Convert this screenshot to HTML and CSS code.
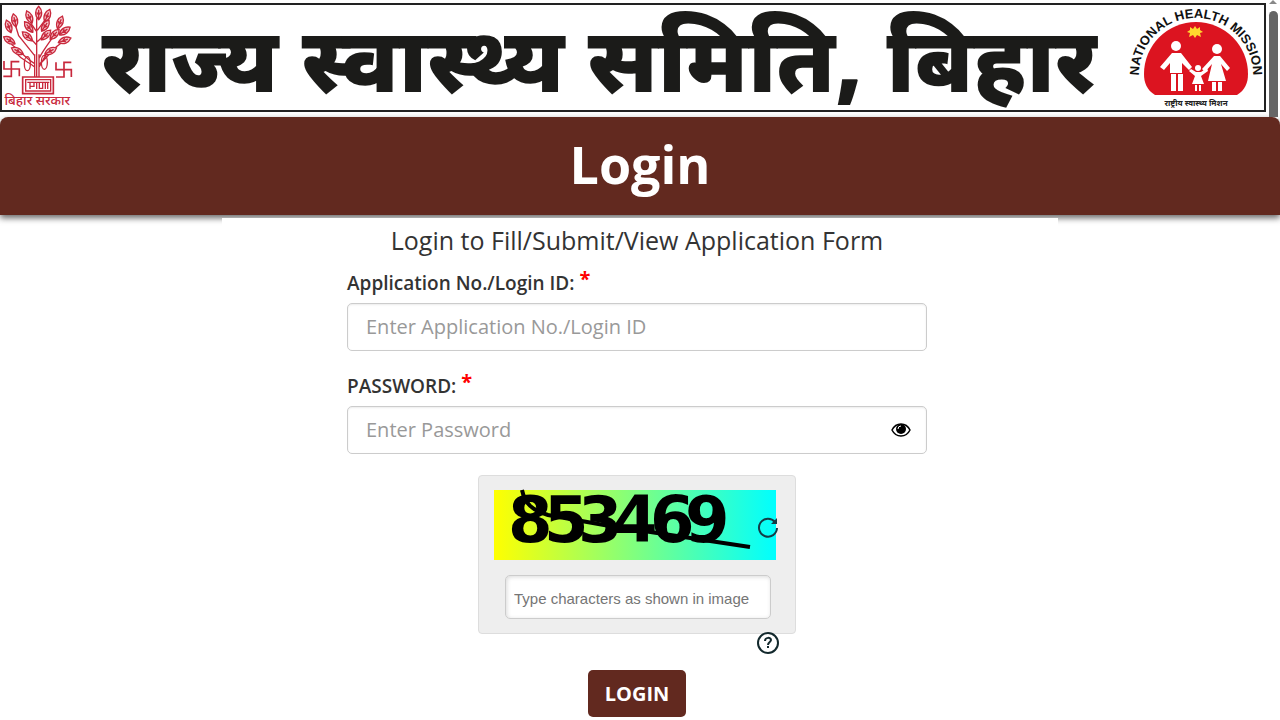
FILE: index.html
```html
<!DOCTYPE html>
<html lang="en">
<head>
    <meta charset="UTF-8">
    <meta name="viewport" content="width=device-width, initial-scale=1.0">
    <title>Login</title>
    <link rel="stylesheet" href="styles.css">
</head>
<body>
    <header class="top">
        <div class="banner">
            <svg class="bihar-logo" viewBox="0 0 216 318" role="img" aria-label="Bihar Sarkar">
                <defs>
                    <g id="leaf">
                        <path d="M0 20C-13 7 -11 -9 0 -20C11 -9 13 7 0 20Z" fill="#f6c9cf"/>
                        <path d="M0 20V-10M0 6L-6 -2M0 6L6 -2"/>
                    </g>
                </defs>
                <g fill="none" stroke="#c8283c" stroke-width="4">
                    <path d="M98 216V148M111 216V148M104 216V40M98 152L50 92L40 60M98 176C70 160 60 142 28 118M98 186C80 170 62 168 44 146M111 160C128 128 146 108 166 76M111 178C136 160 154 124 186 110M111 186C120 176 126 152 140 140M104 120L78 92M104 112L130 88M104 80L86 54M106 76L130 44"/>
                    <use href="#leaf" transform="translate(110 24)"/>
                    <use href="#leaf" transform="translate(82 36) rotate(-24)"/>
                    <use href="#leaf" transform="translate(136 32) rotate(22)"/>
                    <use href="#leaf" transform="translate(38 46) rotate(-12)"/>
                    <use href="#leaf" transform="translate(174 52) rotate(22)"/>
                    <use href="#leaf" transform="translate(20 64) rotate(-20)"/>
                    <use href="#leaf" transform="translate(80 66) rotate(-38)"/>
                    <use href="#leaf" transform="translate(130 62) rotate(34)"/>
                    <use href="#leaf" transform="translate(76 94) rotate(-48)"/>
                    <use href="#leaf" transform="translate(132 90) rotate(44)"/>
                    <use href="#leaf" transform="translate(158 88) rotate(42)"/>
                    <use href="#leaf" transform="translate(188 78) rotate(55)"/>
                    <use href="#leaf" transform="translate(22 106) rotate(-58)"/>
                    <use href="#leaf" transform="translate(188 106) rotate(70)"/>
                    <use href="#leaf" transform="translate(46 138) rotate(-62)"/>
                    <use href="#leaf" transform="translate(146 138) rotate(62)"/>
                    <ellipse cx="76" cy="176" rx="9" ry="21"/>
                    <ellipse cx="127" cy="172" rx="9" ry="21"/>
                </g>
                <g fill="none" stroke="#c8283c" stroke-width="5">
                    <path d="M6 168V192H52V214M52 170H28V214H4"/>
                    <path d="M162 172V194H208V216M208 172H186V216H162"/>
                    <path d="M62 216H154V266H62Z"/>
                    <path stroke-width="4" d="M71 224H146V258H71ZM76 232H142M84 232V252M84 244H96V232M104 232V252M112 232V250H122V234M130 232V252M137 232V252"/>
                </g>
                <text x="106" y="300" text-anchor="middle" class="bihar-text">बिहार सरकार</text>
            </svg>
            <h1 class="banner-title">राज्य स्वास्थ्य समिति, बिहार</h1>
            <svg class="nhm-logo" viewBox="0 0 140 106" role="img" aria-label="National Health Mission">
                <defs>
                    <path id="arc" d="M15 80V69A57 56 0 0 1 129 69V80"/>
                </defs>
                <path d="M31 90C23 85 20 78 20 69A52 52 0 0 1 124 69C124 78 121 85 113 90Z" fill="#dc1420"/>
                <path d="M71 21L73 24L76 22L76 25L79 27L76 28L77 32L73 30L71 33L69 30L65 32L66 28L63 27L66 25L66 22L69 24Z" fill="#ffd92e"/>
                <g fill="#fff">
                    <circle cx="52" cy="41" r="5"/>
                    <circle cx="93" cy="44" r="5"/>
                    <circle cx="74" cy="63" r="3"/>
                    <path d="M48 48H57L68 62L65 65L58 58V68H46V58L40 65L36 62Z"/>
                    <path d="M47 69H52V86H47ZM54 69H59V86H54Z"/>
                    <path d="M90 51H96L106 63L103 66L97 59L102 76H84L88 59L81 67L78 64Z"/>
                    <path d="M88 77H92V86H88ZM94 77H98V86H94Z"/>
                    <path d="M72 67H77L83 63L84 66L77 71L80 79H68L71 71L65 66L67 64Z"/>
                    <path d="M71 80H73V86H71ZM75 80H77V86H75Z"/>
                </g>
                <text class="nhm-text"><textPath href="#arc" startOffset="50%" text-anchor="middle">NATIONAL HEALTH MISSION</textPath></text>
                <text x="72" y="101" text-anchor="middle" class="nhm-hindi">राष्ट्रीय स्वास्थ्य मिशन</text>
            </svg>
        </div>
        <div class="scroll-track">
            <span class="scroll-arrow"></span>
            <span class="scroll-thumb"></span>
        </div>
    </header>

    <h2 class="page-heading">Login</h2>

    <main class="panel">
        <form class="login-form">
            <h3 class="form-title">Login to Fill/Submit/View Application Form</h3>

            <label class="field-label" for="loginId">Application No./Login ID: <span class="required">*</span></label>
            <input class="field" type="text" id="loginId" placeholder="Enter Application No./Login ID">

            <label class="field-label" for="password">PASSWORD: <span class="required">*</span></label>
            <div class="password-group">
                <input class="field" type="password" id="password" placeholder="Enter Password">
                <button type="button" class="eye-btn" aria-label="Show password">
                    <svg width="20" height="14" viewBox="0 0 20 14">
                        <path d="M1 7C5 -1 15 -1 19 7C15 15 5 15 1 7Z" fill="#fff" stroke="#000" stroke-width="1.5"/>
                        <circle cx="10" cy="6" r="5"/>
                        <path d="M7 6A3 3 0 0 1 10 3" fill="none" stroke="#fff"/>
                    </svg>
                </button>
            </div>

            <div class="captcha-box">
                <div class="captcha-image">
                    <svg class="captcha-code" viewBox="0 0 282 70" role="img" aria-label="Captcha">
                        <text x="14 50 84 119 156 191" y="52" class="captcha-text">853469</text>
                        <path d="M28 0C31 14 38 20 54 25L110 35L256 57" fill="none" stroke="#000" stroke-width="4"/>
                    </svg>
                    <button type="button" class="refresh-btn" aria-label="Refresh captcha">
                        <svg width="22" height="22" viewBox="0 0 22 22">
                            <path d="M18 6A9 9 0 1 0 20 12" fill="none" stroke="#143c46" stroke-width="2"/>
                            <path d="M20 2V8H14Z" fill="#143c46"/>
                        </svg>
                    </button>
                </div>
                <input class="captcha-input" type="text" aria-label="Captcha characters" placeholder="Type characters as shown in image">
                <button type="button" class="help-btn" aria-label="Help">
                    <svg width="24" height="24" viewBox="0 0 24 24" fill="none" stroke="#12282c" stroke-width="2">
                        <circle cx="12" cy="12" r="10" fill="#fff"/>
                        <path d="M9 10C9 6 15 6 15 9C15 11 12 11 12 14M12 15V17"/>
                    </svg>
                </button>
            </div>

            <button type="submit" class="login-btn">LOGIN</button>
        </form>
    </main>
</body>
</html>
```
FILE: styles.css
```css
* {
    margin: 0;
    padding: 0;
    box-sizing: border-box;
}

body {
    background: #fff;
    color: #333;
    font-family: "Open Sans", sans-serif;
}

.top {
    display: flex;
    height: 117px;
}

.banner {
    flex: 1;
    display: flex;
    align-items: center;
    justify-content: space-between;
    height: 109px;
    margin-top: 3px;
    border: 2px solid #222;
}

.bihar-logo {
    width: 72px;
    height: 106px;
}

.bihar-text {
    font-family: "Noto Sans", sans-serif;
    font-size: 40px;
    font-weight: 500;
    fill: #c8283c;
}

.banner-title {
    font-family: "Noto Sans", sans-serif;
    font-size: 90px;
    line-height: 105px;
    font-weight: 900;
    color: #1b1b19;
    white-space: nowrap;
}

.nhm-logo {
    width: 140px;
    height: 106px;
}

.nhm-text {
    font-family: "Liberation Sans", Arial, sans-serif;
    font-size: 13px;
    font-weight: bold;
    fill: #111;
}

.nhm-hindi {
    font-family: "Noto Sans", sans-serif;
    font-size: 8px;
    font-weight: bold;
    fill: #222;
}

.scroll-track {
    display: flex;
    flex-direction: column;
    align-items: center;
    width: 14px;
}

.scroll-arrow {
    border: 4px solid transparent;
    border-top: 0;
    border-bottom-color: #888;
}

.scroll-thumb {
    flex: 1;
    width: 9px;
    margin-top: 7px;
    border-radius: 5px 5px 0 0;
    background: #666;
}

.page-heading {
    height: 98px;
    line-height: 94px;
    border-radius: 8px 8px 0 0;
    background: #62291f;
    box-shadow: 0 3px 6px rgba(0, 0, 0, 0.6);
    color: #fff;
    font-size: 52px;
    text-align: center;
}

.panel {
    position: relative;
    max-width: 836px;
    margin: 3px auto 0;
    padding-right: 6px;
    background: #fff;
}

.login-form {
    display: flex;
    flex-direction: column;
    max-width: 580px;
    margin: 0 auto;
}

.form-title {
    padding: 4px 0 2px;
    font-size: 25px;
    font-weight: 400;
    line-height: 36px;
    text-align: center;
}

.field-label {
    height: 43px;
    line-height: 46px;
    font-size: 19px;
    font-weight: 600;
}

.required {
    color: #f00;
    font-size: 20px;
    font-weight: 700;
    line-height: 20px;
    vertical-align: 4px;
}

.field {
    width: 100%;
    height: 48px;
    padding: 0 18px 2px;
    border: 1px solid #ccc;
    border-radius: 5px;
    box-shadow: inset 0 1px 2px rgba(0, 0, 0, 0.08);
    font-family: inherit;
    font-size: 20px;
    margin-bottom: 12px;
}

.field::placeholder {
    color: #999;
}

.password-group {
    position: relative;
}

.eye-btn {
    position: absolute;
    top: 17px;
    right: 16px;
    height: 14px;
    border: none;
    background: none;
    cursor: pointer;
}

.eye-btn svg,
.refresh-btn svg,
.help-btn svg {
    display: block;
}

.captcha-box {
    position: relative;
    width: 318px;
    margin: 9px auto 0;
    padding: 14px 19px 14px 15px;
    border: 1px solid #ddd;
    border-radius: 4px;
    background: #eee;
}

.captcha-image {
    position: relative;
    height: 70px;
    background: linear-gradient(to right, #ff0, #0ff);
}

.captcha-code {
    display: block;
    width: 100%;
    height: 70px;
    overflow: visible;
}

.captcha-text {
    font-family: "DejaVu Sans", sans-serif;
    font-size: 64px;
    font-weight: bold;
}

.refresh-btn {
    position: absolute;
    top: 26px;
    right: -3px;
    border: none;
    background: none;
    cursor: pointer;
}

.captcha-input {
    display: block;
    width: 266px;
    height: 44px;
    margin: 15px 0 0 11px;
    padding: 3px 8px 0;
    border: 1px solid #ccc;
    border-radius: 5px;
    box-shadow: inset 1px 1px 4px rgba(0, 0, 0, 0.15);
    font-family: "Liberation Sans", Arial, sans-serif;
    font-size: 15px;
}

.captcha-input::placeholder {
    color: #757575;
}

.help-btn {
    position: absolute;
    right: 15px;
    bottom: -22px;
    border: none;
    background: none;
    cursor: pointer;
}

.login-btn {
    align-self: center;
    height: 47px;
    margin-top: 36px;
    padding: 0 17px;
    border: none;
    border-radius: 5px;
    background: #62291f;
    color: #fff;
    font-family: inherit;
    font-size: 20px;
    font-weight: 700;
    cursor: pointer;
}
```
